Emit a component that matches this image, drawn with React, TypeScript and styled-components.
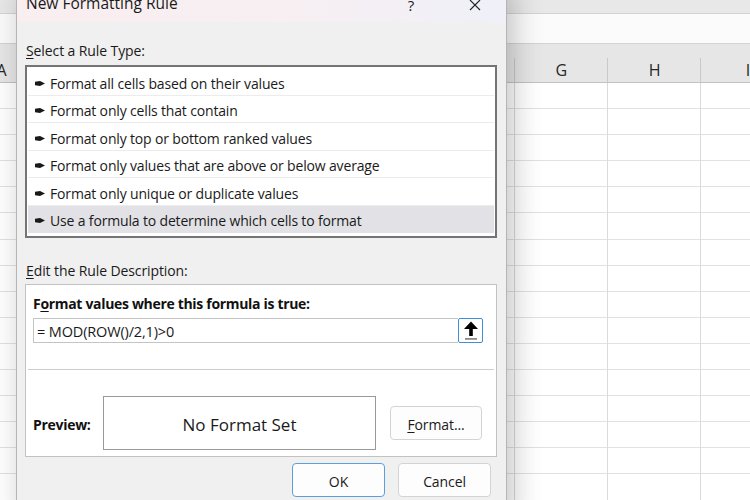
import React from "react";
import styled, { createGlobalStyle } from "styled-components";

const GlobalStyle = createGlobalStyle`
  *, *::before, *::after {
    box-sizing: border-box;
  }

  html, body {
    margin: 0;
    padding: 0;
  }

  body {
    background: #fff;
    overflow: hidden;
    font-family: "Segoe UI", "Open Sans", "Noto Sans", sans-serif;
    color: #1a1a1a;
  }
`;

const COLUMNS = ["A", "B", "C", "D", "E", "F", "G", "H", "I", "J"];
const ROW_COUNT = 17;

const RULE_TYPES = [
  "Format all cells based on their values",
  "Format only cells that contain",
  "Format only top or bottom ranked values",
  "Format only values that are above or below average",
  "Format only unique or duplicate values",
  "Use a formula to determine which cells to format",
];

const PointerIcon = () => (
  <svg width="10" height="7" viewBox="0 0 10 7">
    <polygon points="0,1.8 5,1 10,3.5 5,6 0,5.2" fill="#1a1a1a" />
  </svg>
);

const CollapseIcon = () => (
  <svg width="18" height="21" viewBox="0 0 18 21">
    <path d="M9 1.5 L16 9 L10.8 9 L10.8 16 L7.2 16 L7.2 9 L2 9 Z" fill="#000" />
    <rect x="3" y="18" width="12" height="1.8" fill="#8c8c8c" />
  </svg>
);

const CloseIcon = () => (
  <svg width="12" height="12" viewBox="0 0 12 12">
    <path d="M1 1 L11 11 M11 1 L1 11" stroke="#222" strokeWidth="1.1" />
  </svg>
);

export default function App() {
  return (
    <>
      <GlobalStyle />
      <Screen>
        <Sheet>
          <RibbonEdge />
          <FormulaBar />
          <Grid>
            {COLUMNS.map((col) => (
              <ColumnHead key={col}>{col}</ColumnHead>
            ))}
            {Array.from({ length: ROW_COUNT }).map((_, r) =>
              COLUMNS.map((col) => <Cell key={`${col}${r}`} />)
            )}
          </Grid>
        </Sheet>

        <Dialog>
          <TitleBar>
            <Title>New Formatting Rule</Title>
            <HelpButton>?</HelpButton>
            <CloseButton>
              <CloseIcon />
            </CloseButton>
          </TitleBar>

          <Body>
            <SectionLabel $top={20}>
              <Key>S</Key>elect a Rule Type:
            </SectionLabel>
            <RuleList>
              {RULE_TYPES.map((rule, i) => (
                <RuleItem key={rule} $selected={i === RULE_TYPES.length - 1}>
                  <PointerIcon />
                  {rule}
                </RuleItem>
              ))}
            </RuleList>

            <SectionLabel $top={24}>
              <Key>E</Key>dit the Rule Description:
            </SectionLabel>
            <DescriptionPanel>
              <FormulaSection>
                <Heading>
                  F<Key>o</Key>rmat values where this formula is true:
                </Heading>
                <FormulaBox>
                  <FormulaText>= MOD(ROW()/2,1)&gt;0</FormulaText>
                  <RefButton>
                    <CollapseIcon />
                  </RefButton>
                </FormulaBox>
              </FormulaSection>
              <PreviewSection>
                <PreviewLabel>Preview:</PreviewLabel>
                <PreviewBox>No Format Set</PreviewBox>
                <Button $width={92} $height={34}>
                  <Key>F</Key>ormat...
                </Button>
              </PreviewSection>
            </DescriptionPanel>

            <ButtonRow>
              <Button $width={93} $height={34} $primary>
                OK
              </Button>
              <Button $width={93} $height={34}>
                Cancel
              </Button>
            </ButtonRow>
          </Body>
        </Dialog>
      </Screen>
    </>
  );
}

const Screen = styled.div`
  position: relative;
  width: 750px;
  height: 500px;
  overflow: hidden;
  background: #fff;
`;

const Sheet = styled.div`
  display: flex;
  flex-direction: column;
  height: 100%;
`;

const RibbonEdge = styled.div`
  flex-shrink: 0;
  height: 14px;
  background: #e8e8e8;
  border-bottom: 1px solid #d3d3d3;
`;

const FormulaBar = styled.div`
  flex-shrink: 0;
  height: 30px;
  background: #fbfbfb;
  border-bottom: 1px solid #d2d2d2;
`;

const Grid = styled.div`
  flex-shrink: 0;
  display: grid;
  grid-template-columns: repeat(10, 93.3px);
  grid-template-rows: 39px;
  grid-auto-rows: 26.1px;
  margin-left: -45px;
`;

const ColumnHead = styled.div`
  position: relative;
  display: flex;
  align-items: flex-end;
  justify-content: center;
  padding-bottom: 1px;
  background: #e6e6e6;
  border-bottom: 1px solid #c2c2c2;
  font-size: 16px;
  color: #262626;

  &::after {
    content: "";
    position: absolute;
    right: 0;
    top: 14px;
    bottom: 0;
    width: 1px;
    background: #c9c9c9;
  }
`;

const Cell = styled.div`
  border-right: 1px solid #dadada;
  border-bottom: 1px solid #e1e1e1;
`;

const Dialog = styled.section`
  position: absolute;
  left: 16px;
  top: -13px;
  width: 491px;
  height: 540px;
  display: flex;
  flex-direction: column;
  background: #f0f0f0;
  border: 1px solid #b5b5b5;
  box-shadow: 6px 0 28px rgba(0, 0, 0, 0.24);
`;

const TitleBar = styled.header`
  display: flex;
  align-items: center;
  height: 34px;
  padding-left: 9px;
  background: linear-gradient(90deg, #f9eef0 0%, #f7eff2 55%, #eff0f8 100%);
`;

const Title = styled.div`
  flex: 1;
  margin-top: -4px;
  font-size: 15.5px;
  color: #1a1a1a;
`;

const HelpButton = styled.div`
  width: 30px;
  margin-right: 26px;
  text-align: center;
  font-size: 15px;
  color: #222;
`;

const CloseButton = styled.div`
  display: flex;
  align-items: center;
  justify-content: center;
  width: 46px;
  margin-right: 8px;
`;

const Body = styled.div`
  display: flex;
  flex-direction: column;
  padding: 0 9px 0 8px;
`;

const SectionLabel = styled.div<{ $top: number }>`
  margin-top: ${(p) => p.$top}px;
  font-size: 14px;
  line-height: 18px;
  padding-left: 1px;
  letter-spacing: -0.1px;
`;

const Key = styled.span`
  text-decoration: underline;
  text-underline-offset: 2px;
`;

const RuleList = styled.div`
  margin-top: 5px;
  height: 173px;
  padding: 1px 1px 3px;
  background: #fff;
  border: 2px solid #747474;
`;

const RuleItem = styled.div<{ $selected?: boolean }>`
  display: flex;
  align-items: center;
  gap: 5px;
  height: 27.5px;
  padding: 4px 0 0 7px;
  font-size: 14px;
  letter-spacing: -0.16px;
  color: #1a1a1a;
  background: ${(p) => (p.$selected ? "#e2e2e6" : "#fff")};
  border-bottom: 1px solid ${(p) => (p.$selected ? "#e2e2e6" : "#ececec")};
`;

const DescriptionPanel = styled.div`
  margin-top: 4px;
  display: flex;
  flex-direction: column;
  padding: 0 2px;
  background: #fff;
  border: 1px solid #c2c2c2;
`;

const FormulaSection = styled.div`
  display: flex;
  flex-direction: column;
  padding: 10px 11px 26px 5px;
  border-bottom: 1px solid #cdcdcd;
`;

const Heading = styled.div`
  font-size: 14px;
  line-height: 18px;
  font-weight: 700;
  letter-spacing: -0.32px;
  color: #111;
`;

const FormulaBox = styled.div`
  display: flex;
  margin-top: 5px;
  height: 25px;
`;

const FormulaText = styled.div`
  flex: 1;
  display: flex;
  align-items: center;
  padding: 1px 0 0 3px;
  font-size: 14.5px;
  letter-spacing: -0.15px;
  border: 1px solid #c4c4c4;
  border-right: none;
`;

const RefButton = styled.div`
  display: flex;
  align-items: center;
  justify-content: center;
  width: 25px;
  height: 25px;
  background: #fff;
  border: 1px solid #3d8fdc;
  border-radius: 2px;
`;

const PreviewSection = styled.div`
  display: flex;
  align-items: center;
  padding: 26px 11px 6px 5px;
`;

const PreviewLabel = styled.div`
  width: 70px;
  padding-top: 2px;
  font-size: 14px;
  font-weight: 700;
  letter-spacing: -0.3px;
  color: #111;
`;

const PreviewBox = styled.div`
  display: flex;
  align-items: center;
  justify-content: center;
  width: 273px;
  height: 54px;
  padding-top: 2px;
  font-size: 17px;
  border: 1px solid #999;
  margin-right: 14px;
`;

const Button = styled.div<{ $width: number; $height: number; $primary?: boolean }>`
  display: flex;
  align-items: center;
  justify-content: center;
  width: ${(p) => p.$width}px;
  height: ${(p) => p.$height}px;
  padding-top: 2px;
  font-size: 14px;
  letter-spacing: -0.1px;
  color: #1a1a1a;
  background: #fdfdfd;
  border: 1px solid ${(p) => (p.$primary ? "#5b9fdc" : "#d3d3d3")};
  border-radius: 4px;
`;

const ButtonRow = styled.div`
  display: flex;
  justify-content: flex-end;
  gap: 13px;
  margin-top: 6px;
  padding-right: 6px;
`;
